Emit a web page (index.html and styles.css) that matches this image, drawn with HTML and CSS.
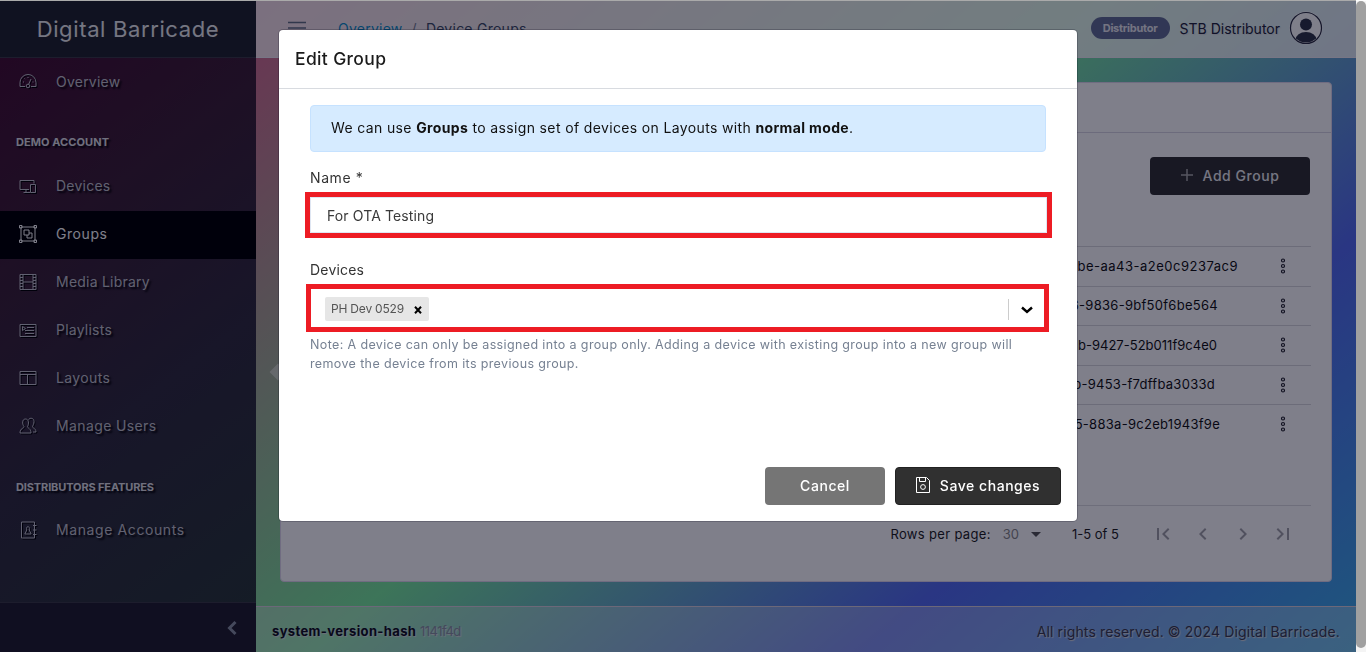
FILE: index.html
```html
<!DOCTYPE html>
<html lang="en">
<head>
<meta charset="utf-8">
<title>Device Groups</title>
<link rel="stylesheet" href="styles.css">
</head>
<body>
<div class="app">
  <aside class="sidebar">
    <div class="brand"><span>Digital Barricade</span></div>
    <nav class="nav">
      <a class="nav-item"><svg class="ico" viewBox="0 0 18 18"><path d="M1 13.500V9.500a8 8 0 0 1 16 0v4h-5M1 13.500h5"/><circle cx="9" cy="13" r="1.800"/><path d="M9.700 11.200L12 6M4 9h1M5.500 5.500l.7.7M9 4v1M13.500 9h1"/></svg><span>Overview</span></a>
      <div class="nav-title"><span>DEMO ACCOUNT</span></div>
      <a class="nav-item"><svg class="ico" viewBox="0 0 18 18"><path d="M10 12.500H1v-9h14v3M7 12.500v3M4.500 15.500H11M11.500 7.500h5v8h-5z"/></svg><span>Devices</span></a>
      <a class="nav-item active"><svg class="ico" viewBox="0 0 18 18"><path d="M2 2h14v14H2zM5 5h5v5H5zM10 8h3v5H8v-3"/><path d="M.5.5h2.500v2.500H.5zM15 .5h2.500v2.500H15zM.5 15h2.500v2.500H.5zM15 15h2.500v2.500H15z"/></svg><span class="sp5">Groups</span></a>
      <a class="nav-item"><svg class="ico" viewBox="0 0 18 18"><path d="M1 1.500h16v15H1zM4 1.500v15M14 1.500v15M4 9h10M1 4.500h3M1 7.500h3M1 10.500h3M1 13.500h3M14 4.500h3M14 7.500h3M14 10.500h3M14 13.500h3"/></svg><span>Media Library</span></a>
      <a class="nav-item"><svg class="ico" viewBox="0 0 18 18"><path d="M1 3.500h16v12H1zM8 6.500h7M6 9.500h9M6 12.500h9"/><path d="M3.500 5.500v4L6.500 7.500z"/></svg><span>Playlists</span></a>
      <a class="nav-item"><svg class="ico" viewBox="0 0 18 18"><path d="M1 2.500h16v13H1zM1 5.500h16M8.500 5.500v10"/></svg><span class="sp4">Layouts</span></a>
      <a class="nav-item"><svg class="ico" viewBox="0 0 18 18"><path d="M5 9.500C3 7 3 2 6.500 2S10 7 8.500 9.500c0 2 3.500 1.500 3.500 6.500H1c0-5 4-4.500 4-6.500zM9.500 2.500C11 .5 15 .8 15 4.500 15 7 14 8 13.500 9.500c0 2 3.500 1.500 3.500 5.500h-3"/></svg><span class="sp4">Manage Users</span></a>
      <div class="nav-title low"><span>DISTRIBUTORS FEATURES</span></div>
      <a class="nav-item"><svg class="ico" viewBox="0 0 18 18"><path d="M2.500 1h13v16h-13zM14 4.500h3.500M14 9h3.500M14 13.500h3.500M7.800 9c-1.500-4.500 3.800-4.500 2.400 0l2 4H5.800z"/></svg><span class="sp6">Manage Accounts</span></a>
    </nav>
    <div class="sidebar-foot"><svg class="fold" viewBox="0 0 12 16"><path d="M9.500 2L3.500 8l6 6"/></svg></div>
  </aside>
  <div class="main">
    <header class="topbar">
      <svg class="burger" viewBox="0 0 18 14"><path d="M0 1.500h18M0 7h18M0 12.500h18"/></svg>
      <div class="crumbs"><a>Overview</a><i>/</i><span>Device Groups</span></div>
      <div class="user">
        <span class="badge"><span>Distributor</span></span>
        <span class="username">STB Distributor</span>
        <svg class="avatar" viewBox="0 0 34 34"><defs><clipPath id="face"><circle cx="17" cy="17" r="14.500"/></clipPath></defs><circle cx="17" cy="17" r="16.500" fill="#fff"/><circle cx="17" cy="17" r="15.500" fill="#fff" stroke="#2a2f42" stroke-width="1.200"/><g clip-path="url(#face)" fill="#2f3546"><circle cx="17" cy="13.500" r="6"/><ellipse cx="17" cy="29" rx="10.500" ry="8"/></g></svg>
      </div>
    </header>
    <section class="content">
      <div class="card">
        <div class="card-head"></div>
        <div class="toolbar"><button class="btn btn-add"><svg class="plus" viewBox="0 0 12 12"><path d="M6 0v12M0 6h12"/></svg><span>Add Group</span></button></div>
        <div class="table">
          <div class="row r1"><span>be-aa43-a2e0c9237ac9</span><svg class="dots" viewBox="0 0 6 16"><circle cx="3" cy="2.500" r="1.500"/><circle cx="3" cy="8" r="1.500"/><circle cx="3" cy="13.500" r="1.500"/></svg></div>
          <div class="row r2"><span>6-9836-9bf50f6be564</span><svg class="dots" viewBox="0 0 6 16"><circle cx="3" cy="2.500" r="1.500"/><circle cx="3" cy="8" r="1.500"/><circle cx="3" cy="13.500" r="1.500"/></svg></div>
          <div class="row r3"><span>b-9427-52b011f9c4e0</span><svg class="dots" viewBox="0 0 6 16"><circle cx="3" cy="2.500" r="1.500"/><circle cx="3" cy="8" r="1.500"/><circle cx="3" cy="13.500" r="1.500"/></svg></div>
          <div class="row r4"><span>b-9453-f7dffba3033d</span><svg class="dots" viewBox="0 0 6 16"><circle cx="3" cy="2.500" r="1.500"/><circle cx="3" cy="8" r="1.500"/><circle cx="3" cy="13.500" r="1.500"/></svg></div>
          <div class="row r5"><span>5-883a-9c2eb1943f9e</span><svg class="dots" viewBox="0 0 6 16"><circle cx="3" cy="2.500" r="1.500"/><circle cx="3" cy="8" r="1.500"/><circle cx="3" cy="13.500" r="1.500"/></svg></div>
        </div>
        <div class="pager">
          <span class="rpp">Rows per page:</span><span class="count">30</span><svg class="caret" viewBox="0 0 10 5"><path d="M0 0h10L5 5z"/></svg><span class="range">1-5 of 5</span>
          <svg class="pg" viewBox="0 0 24 24"><path d="M18.400 16.600L13.800 12l4.600-4.600L17 6l-6 6 6 6zM6 6h2v12H6z"/></svg>
          <svg class="pg" viewBox="0 0 24 24"><path d="M15.400 7.400L14 6l-6 6 6 6 1.400-1.400L10.800 12z"/></svg>
          <svg class="pg" viewBox="0 0 24 24"><path d="M10 6L8.600 7.400l4.600 4.600-4.600 4.600L10 18l6-6z"/></svg>
          <svg class="pg" viewBox="0 0 24 24"><path d="M5.600 7.400l4.600 4.600-4.600 4.600L7 18l6-6-6-6zM16 6h2v12h-2z"/></svg>
        </div>
      </div>
    </section>
    <footer class="footer">
      <div><b>system-version-hash</b> <span class="hash">1141f4d</span></div>
      <span class="rights">All rights reserved. © 2024 Digital Barricade.</span>
    </footer>
  </div>
  <div class="scroll"><div class="thumb"></div></div>
</div>
<div class="backdrop"></div>
<div class="drag-mark"></div>
<div class="modal">
  <div class="modal-head"><h5>Edit Group</h5></div>
  <div class="modal-body">
    <div class="alert"><span>We can use <b>Groups</b> to assign set of devices on Layouts with <b>normal mode</b>.</span></div>
    <label class="label"><span class="sp6">Name *</span></label>
    <div class="field field-name"><div class="input"><span>For OTA Testing</span></div></div>
    <label class="label label-dev"><span>Devices</span></label>
    <div class="field field-dev">
      <div class="chip"><span>PH Dev 0529</span><svg class="x" viewBox="0 0 8 8"><path d="M1 .8l6 6.400M7 .8L1 7.200"/></svg></div>
      <div class="sep"></div>
      <svg class="down" viewBox="0 0 14 10"><path d="M2 2.500l5 4.500 5-4.500"/></svg>
    </div>
    <p class="note">Note: A device can only be assigned into a group only. Adding a device with existing group into a new group will<br>remove the device from its previous group.</p>
  </div>
  <div class="modal-foot">
    <button class="btn btn-cancel"><span>Cancel</span></button>
    <button class="btn btn-save"><svg class="disk" viewBox="0 0 14 16"><path d="M.5.500h10l3 3v12H.5zM3.500.5v4h6v-4"/><circle cx="7" cy="10" r="2.400"/></svg><span>Save changes</span></button>
  </div>
</div>
</body>
</html>
```
FILE: styles.css
```css
* { box-sizing: border-box; }
body {
  margin: 0;
  width: 1366px;
  height: 652px;
  overflow: hidden;
  font-family: Inter, "Open Sans", sans-serif;
  font-size: 14px;
  color: #1c1c1c;
}
.app {
  display: flex;
  height: 652px;
  background: linear-gradient(140deg, #e0508c 0%, #d07090 15%, #7aea9c 50.700%, #546cf0 76.500%, #3cb0e6 100%);
  border-top: 1px solid #fff;
}
.sidebar { width: 256px; display: flex; flex-direction: column; background: linear-gradient(143deg, #460c30 0%, #3c2034 32%, #302c3c 60%, #283a36 100%); }
.brand { height: 57px; background: #20242c; border-bottom: 1px solid #3a3a44; display: flex; align-items: center; justify-content: center; font-size: 22px; letter-spacing: .63px; color: #ebedef; }
.nav { flex: 1; padding-top: 1px; text-shadow: 2px 2px 2px #000; letter-spacing: .23px; }
.sp4 { letter-spacing: .38px; }
.sp5 { letter-spacing: .57px; }
.sp6 { letter-spacing: .6px; }
.nav-item { height: 48px; display: flex; align-items: center; gap: 19px; padding: 0 0 3px 19px; color: #c3c3cc; }
.nav-item span { margin-top: -1px; }
.nav-item.active { background: #000; color: #fff; }
.ico { width: 18px; height: 18px; fill: none; stroke: currentColor; stroke-width: 1; filter: drop-shadow(1px 1px 0 #000); }
.nav-title { height: 56px; padding: 28px 0 0 16px; font-size: 11px; line-height: 14px; font-weight: 700; letter-spacing: .07px; color: #e0e0e6; }
.nav-title.low { padding-top: 29px; letter-spacing: -.13px; }
.sidebar-foot { height: 50px; background: #201e2c; border-top: 1px solid #3a3a44; display: flex; justify-content: flex-end; align-items: center; padding-right: 18px; }
.fold { width: 12px; height: 16px; fill: none; stroke: #8a93a2; stroke-width: 3; }
.main { width: 1100px; display: flex; flex-direction: column; }
.topbar { height: 57px; background: rgba(255,255,255,.8); border-bottom: 1px solid #f0edf4; display: flex; align-items: center; padding: 0 33px 2px 32px; }
.burger { width: 18px; height: 14px; stroke: #636f83; stroke-width: 1.300; }
.crumbs { display: flex; margin-left: 32px; letter-spacing: .25px; color: #3c4b64; }
.crumbs a { color: #0f8fc8; }
.crumbs i { font-style: normal; margin: 0 9px; color: #768192; }
.user { margin-left: auto; display: flex; align-items: center; gap: 10px; }
.badge { width: 79px; height: 22px; border-radius: 11px; background: #636f94; color: #e8e8ee; font-size: 11px; font-weight: 700; letter-spacing: -.26px; display: flex; align-items: center; justify-content: center; padding-bottom: 1px; }
.username { color: #20243a; text-shadow: 1px 1px 1px #ddd; }
.avatar { width: 34px; height: 34px; margin-left: -1px; }
.content { flex: 1; padding: 24px 24px; }
.card { height: 500px; background: #fff; border: 1px solid #e0d8ec; border-radius: 4px; }
.card-head { height: 50px; border-bottom: 1px solid #d8d6e2; }
.toolbar { display: flex; justify-content: flex-end; padding: 24px 21px 0 0; }
.btn { height: 38px; border: 1px solid transparent; border-radius: 4px; display: flex; align-items: center; justify-content: center; font: 500 14px Inter, "Open Sans", sans-serif; letter-spacing: .55px; color: #fff; padding: 0 0 2px; }
.btn-add { width: 160px; background: #303030; gap: 10px; color: #ebedef; }
.plus { width: 12px; height: 12px; stroke: #aaa; stroke-width: 1.500; }
.table { margin: 51px 20px 0; height: 260px; border-bottom: 1px solid #dcdce0; }
.row { height: 39.500px; border-top: 1px solid #d8d8dc; display: flex; align-items: center; justify-content: flex-end; font-size: 13px; letter-spacing: .28px; color: #111; }
.row span { margin-top: -1px; }
.dots { width: 6px; height: 16px; margin-right: 25px; fill: none; stroke: #20202a; stroke-width: 1.200; }
.r1 .dots { margin-left: 42px; }
.r2 .dots { margin-left: 62px; }
.r3 .dots { margin-left: 63px; }
.r4 .dots { margin-left: 65px; }
.r5 .dots { margin-left: 60px; }
.r1 { letter-spacing: .5px; }
.r3 { letter-spacing: .02px; }
.pager { height: 56px; display: flex; align-items: center; justify-content: flex-end; padding-right: 28px; font-size: 13px; }
.rpp { letter-spacing: .33px; }
.count { margin-left: 12px; color: #888; }
.caret { width: 10px; height: 5px; margin-left: 12px; fill: #555; }
.range { margin: 0 24px 0 31px; }
.pg { width: 24px; height: 24px; margin: 0 8px; fill: #a2a2a8; }
.footer { height: 46px; background: rgba(235,237,239,.33); border-top: 1px solid #d8d0dc; display: flex; align-items: center; justify-content: space-between; padding: 3px 16px 0; font-size: 13px; color: #101020; text-shadow: 1px 1px 1px #ddd; }
.footer b { letter-spacing: .37px; }
.hash { color: #8a93a2; letter-spacing: -.5px; }
.rights { font-size: 14px; letter-spacing: .13px; color: #3c3c50; }
.scroll { width: 10px; background: #f4f4f4; }
.thumb { height: 647px; border-radius: 5px; background: #a0a0a0; }
.backdrop { position: fixed; inset: 0 10px 0 0; background: rgba(0,0,21,.5); border-top: 1px solid #aaa; }
.drag-mark { position: absolute; left: 272px; top: 366px; width: 12px; height: 12px; background: rgba(150,145,160,.3); transform: rotate(45deg); }
.modal { position: absolute; left: 279px; top: 30px; width: 798px; height: 491px; background: #fff; border-radius: 4px; box-shadow: 0 0 0 1px rgba(0,0,21,.2); display: flex; flex-direction: column; }
.modal-head { height: 59px; border-bottom: 1px solid #d8dbe0; padding: 0 0 2px 16px; display: flex; align-items: center; }
h5 { margin: 0; font-size: 17.500px; font-weight: 500; letter-spacing: .35px; color: #1a1a1a; }
.modal-body { flex: 1; padding: 16px 31px; }
.alert { height: 47px; background: #d6ebff; border: 1px solid #c6e2ff; border-radius: 4px; padding: 0 0 2px 20px; display: flex; align-items: center; letter-spacing: .36px; color: #111; }
.label { display: block; margin-top: 16px; line-height: 20px; letter-spacing: .2px; color: #333; }
.field { border: 5px solid #ed1c24; }
.field-name { height: 46px; margin: 4px -6px 0 -5px; }
.input { height: 36px; border: 1px solid #dfe6f2; padding-left: 16px; display: flex; align-items: center; letter-spacing: .12px; color: #3a3a3a; }
.label-dev { margin-top: 22px; }
.field-dev { height: 48px; margin: 4px -3px 0 -4px; display: flex; align-items: center; padding: 2px 0 0 14px; }
.chip { width: 104px; height: 24px; background: #e6e6e6; border-radius: 2px; padding: 0 7px 2px 6px; display: flex; justify-content: space-between; align-items: center; font-size: 12px; letter-spacing: -.2px; color: #555; }
.x { width: 8px; height: 8px; margin-top: 3px; stroke: #000; stroke-width: 2; }
.sep { margin-left: auto; width: 1px; height: 21px; background: #ccc; }
.down { width: 14px; height: 10px; margin: 2px 10px 0 11px; fill: none; stroke: #000; stroke-width: 2.400; }
.note { margin: 3px 0 0; font-size: 12.500px; line-height: 19px; letter-spacing: .37px; color: #768192; white-space: nowrap; }
.modal-foot { height: 54px; display: flex; justify-content: flex-end; gap: 10px; padding-right: 16px; }
.btn-cancel { width: 120px; background: #757575; }
.btn-save { width: 166px; background: #303030; border-color: #222; gap: 10px; }
.disk { width: 14px; height: 16px; fill: none; stroke: #fff; stroke-width: 1; }
```
